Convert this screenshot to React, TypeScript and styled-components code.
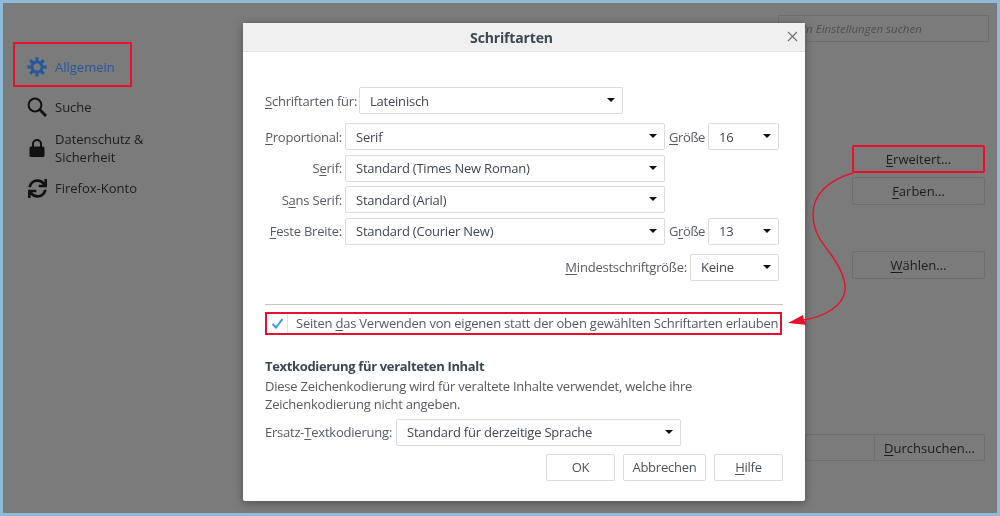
import styled, { createGlobalStyle } from 'styled-components'
import { FaSync } from 'react-icons/fa'

const GlobalStyle = createGlobalStyle`
  html, body {
    margin: 0;
    padding: 0;
    background: #7b7b7b;
  }
  * {
    box-sizing: border-box;
  }
`

const Frame = styled.div`
  position: relative;
  width: 1000px;
  height: 516px;
  display: flex;
  overflow: hidden;
  border: 3px solid #8ebbd8;
  background: #7b7b7b;
  color: #1c1c1c;
  font-family: 'Open Sans', 'Noto Sans', sans-serif;
  font-size: 13px;
  filter: blur(0.4px);
`

const Sidebar = styled.nav`
  width: 240px;
  padding: 39px 0 0 10px;
  display: flex;
  flex-direction: column;
  gap: 3px;
`

const NavItem = styled.div<{ $active?: boolean; $tall?: boolean }>`
  width: 119px;
  height: ${(p) => (p.$active ? '45px' : p.$tall ? '41px' : '34px')};
  padding: ${(p) => (p.$active ? '4px 0 0 12px' : '0 0 0 14px')};
  display: flex;
  align-items: center;
  gap: 8px;
  line-height: 18px;
  white-space: nowrap;
  color: ${(p) => (p.$active ? '#28589b' : '#1c1c1c')};
  border: ${(p) => (p.$active ? '2px solid #e8102c' : 'none')};
`

const NavIcon = styled.span`
  width: 20px;
  flex: none;
  display: flex;
  justify-content: center;
`

const Content = styled.main`
  flex: 1;
  padding: 12px 8px 0 0;
  display: flex;
  flex-direction: column;
  align-items: flex-end;
`

const SearchBox = styled.div`
  width: 211px;
  height: 27px;
  padding-left: 24px;
  display: flex;
  align-items: center;
  border: 1px solid #6e6e6e;
  font-size: 11.5px;
  font-style: italic;
  color: #505050;
`

const PageButton = styled.div<{ $marked?: boolean; $top: number }>`
  width: 133px;
  height: 28px;
  margin: ${(p) => p.$top}px 4px 0 0;
  display: flex;
  align-items: center;
  justify-content: center;
  border-radius: 2px;
  border: ${(p) => (p.$marked ? '2px solid #e8102c' : '1px solid #6e6e6e')};
`

const FileRow = styled.div`
  width: 180px;
  height: 27px;
  margin: 155px 4px 0 0;
  display: flex;
  justify-content: flex-end;
  border: 1px solid #6e6e6e;
  border-radius: 2px;
`

const FileButton = styled.div`
  width: 110px;
  display: flex;
  align-items: center;
  justify-content: center;
  border-left: 1px solid #6e6e6e;
`

const Key = styled.span`
  text-decoration: underline;
  text-underline-offset: 2px;
`

const Dialog = styled.section`
  position: absolute;
  left: 240px;
  top: 20px;
  width: 562px;
  height: 478px;
  background: #fff;
  border-radius: 2px;
  color: #555b63;
  letter-spacing: -0.22px;
  box-shadow: 0 2px 8px rgba(0, 0, 0, 0.35);
`

const DialogHeader = styled.header`
  position: relative;
  height: 29px;
  display: flex;
  align-items: center;
  justify-content: center;
  padding-right: 25px;
  background: #f0f0f0;
  border-bottom: 1px solid #e2e2e2;
  font-weight: 700;
  font-size: 14px;
  letter-spacing: -0.15px;
  color: #3e4651;
`

const CloseIcon = styled.svg`
  position: absolute;
  right: 7px;
  top: 8px;
  width: 11px;
  height: 11px;
  stroke: #6f7378;
  stroke-width: 1.2;
`

const DialogBody = styled.div`
  padding: 35px 22px 0;
`

const Row = styled.div<{ $top?: number; $end?: boolean }>`
  display: flex;
  align-items: center;
  gap: 3px;
  margin-top: ${(p) => p.$top ?? 0}px;
  justify-content: ${(p) => (p.$end ? 'flex-end' : 'flex-start')};
  padding-right: ${(p) => (p.$end ? '4px' : '0')};
  white-space: nowrap;
`

const FontGrid = styled.div`
  margin-top: 9px;
  display: grid;
  grid-template-columns: 77px 320px 37px 71px;
  grid-auto-rows: 27px;
  column-gap: 3px;
  row-gap: 4.6px;
  align-items: center;
`

const FieldLabel = styled.label<{ $width?: number }>`
  text-align: ${(p) => (p.$width ? 'left' : 'right')};
  width: ${(p) => (p.$width ? `${p.$width}px` : 'auto')};
  flex: none;
  white-space: nowrap;
`

const SizeLabel = styled.label`
  padding-left: 1px;
  white-space: nowrap;
  letter-spacing: -0.4px;
`

const SelectBox = styled.div<{ $width?: number }>`
  position: relative;
  width: ${(p) => (p.$width ? `${p.$width}px` : '100%')};
  height: 27px;
  padding-left: 10px;
  display: flex;
  align-items: center;
  background: #fff;
  border: 1px solid #dcdcdc;
  border-radius: 2px;
  color: #414750;
  white-space: nowrap;

  &::after {
    content: '';
    position: absolute;
    right: 7px;
    top: 10px;
    border-left: 4px solid transparent;
    border-right: 4px solid transparent;
    border-top: 4px solid #111;
  }
`

const Divider = styled.hr`
  margin: 23px 0 0;
  border: 0;
  border-top: 1px solid #c4c4c4;
`

const CheckRow = styled.div`
  margin-top: 7px;
  width: 517px;
  height: 23px;
  display: flex;
  align-items: center;
  border: 2px solid #e8102c;
  white-space: nowrap;
`

const CheckCell = styled.span`
  width: 21px;
  height: 19px;
  flex: none;
  margin-right: 8px;
  display: flex;
  align-items: center;
  justify-content: center;
  border-right: 1px solid #e4e4e4;
`

const Heading = styled.h3`
  margin: 22px 0 0;
  font-size: 13px;
  line-height: 18px;
  font-weight: 700;
  letter-spacing: -0.34px;
  color: #3e4651;
`

const Description = styled.p`
  margin: 2px 0 0;
  width: 470px;
  line-height: 18px;
`

const Actions = styled.div`
  margin-top: 8px;
  display: flex;
  justify-content: flex-end;
  gap: 8px;
`

const DialogButton = styled.div<{ $width: number }>`
  width: ${(p) => p.$width}px;
  height: 27px;
  display: flex;
  align-items: center;
  justify-content: center;
  border: 1px solid #dcdcdc;
  border-radius: 2px;
  color: #4c525a;
`

const Annotation = styled.svg`
  position: absolute;
  left: -3px;
  top: -3px;
  width: 1000px;
  height: 516px;
  pointer-events: none;
`

function GearIcon() {
  const angles = [0, 45, 90, 135, 180, 225, 270, 315]
  return (
    <svg width="20" height="20" viewBox="0 0 20 20">
      <circle cx="10" cy="10" r="5" fill="none" stroke="#28589b" strokeWidth="3" />
      {angles.map((angle) => (
        <rect key={angle} x="8.4" y="0.4" width="3.2" height="5" fill="#28589b" transform={`rotate(${angle} 10 10)`} />
      ))}
    </svg>
  )
}

function SearchIcon() {
  return (
    <svg width="20" height="20" viewBox="0 0 20 20" fill="none" stroke="#111">
      <circle cx="8" cy="8" r="6.4" strokeWidth="2" />
      <path d="M12.6 12.6L19 19" strokeWidth="2.8" />
    </svg>
  )
}

function LockIcon() {
  return (
    <svg width="16" height="20" viewBox="0 0 16 20">
      <path d="M4 9V6a4 4 0 0 1 8 0v3" fill="none" stroke="#111" strokeWidth="2" />
      <rect x="0.5" y="8.5" width="15" height="10.5" rx="1.5" fill="#111" />
    </svg>
  )
}

export default function App() {
  return (
    <>
      <GlobalStyle />
      <Frame>
        <Sidebar>
          <NavItem $active>
            <NavIcon>
              <GearIcon />
            </NavIcon>
            Allgemein
          </NavItem>
          <NavItem>
            <NavIcon>
              <SearchIcon />
            </NavIcon>
            Suche
          </NavItem>
          <NavItem $tall>
            <NavIcon>
              <LockIcon />
            </NavIcon>
            <span>
              Datenschutz &amp;
              <br />
              Sicherheit
            </span>
          </NavItem>
          <NavItem>
            <NavIcon>
              <FaSync size={19} color="#111" />
            </NavIcon>
            Firefox-Konto
          </NavItem>
        </Sidebar>

        <Content>
          <SearchBox>In Einstellungen suchen</SearchBox>
          <PageButton $marked $top={103}>
            <span>
              <Key>E</Key>rweitert...
            </span>
          </PageButton>
          <PageButton $top={4}>
            <span>
              <Key>F</Key>arben...
            </span>
          </PageButton>
          <PageButton $top={46}>
            <span>
              <Key>W</Key>ählen...
            </span>
          </PageButton>
          <FileRow>
            <FileButton>
              <span>
                <Key>D</Key>urchsuchen...
              </span>
            </FileButton>
          </FileRow>
        </Content>

        <Dialog>
          <DialogHeader>
            Schriftarten
            <CloseIcon viewBox="0 0 11 11">
              <path d="M1 1l9 9M10 1l-9 9" />
            </CloseIcon>
          </DialogHeader>
          <DialogBody>
            <Row>
              <FieldLabel $width={91}>
                <Key>S</Key>chriftarten für:
              </FieldLabel>
              <SelectBox $width={264}>Lateinisch</SelectBox>
            </Row>

            <FontGrid>
              <FieldLabel>
                <Key>P</Key>roportional:
              </FieldLabel>
              <SelectBox>Serif</SelectBox>
              <SizeLabel>
                <Key>G</Key>röße
              </SizeLabel>
              <SelectBox>16</SelectBox>

              <FieldLabel>
                S<Key>e</Key>rif:
              </FieldLabel>
              <SelectBox>Standard (Times New Roman)</SelectBox>
              <span />
              <span />

              <FieldLabel>
                S<Key>a</Key>ns Serif:
              </FieldLabel>
              <SelectBox>Standard (Arial)</SelectBox>
              <span />
              <span />

              <FieldLabel>
                <Key>F</Key>este Breite:
              </FieldLabel>
              <SelectBox>Standard (Courier New)</SelectBox>
              <SizeLabel>
                G<Key>r</Key>öße
              </SizeLabel>
              <SelectBox>13</SelectBox>
            </FontGrid>

            <Row $top={9} $end>
              <FieldLabel>
                <Key>M</Key>indestschriftgröße:
              </FieldLabel>
              <SelectBox $width={89}>Keine</SelectBox>
            </Row>

            <Divider />

            <CheckRow>
              <CheckCell>
                <svg width="13" height="11" viewBox="0 0 13 11" fill="none">
                  <path d="M1.5 6l3.5 3.5L11.5 1" stroke="#3d97e0" strokeWidth="2" />
                </svg>
              </CheckCell>
              <span>
                Seiten <Key>d</Key>as Verwenden von eigenen statt der oben gewählten Schriftarten erlauben
              </span>
            </CheckRow>

            <Heading>Textkodierung für veralteten Inhalt</Heading>
            <Description>
              Diese Zeichenkodierung wird für veraltete Inhalte verwendet, welche ihre Zeichenkodierung nicht angeben.
            </Description>

            <Row $top={6}>
              <FieldLabel $width={128}>
                Ersatz-<Key>T</Key>extkodierung:
              </FieldLabel>
              <SelectBox $width={285}>Standard für derzeitige Sprache</SelectBox>
            </Row>

            <Actions>
              <DialogButton $width={69}>OK</DialogButton>
              <DialogButton $width={83}>Abbrechen</DialogButton>
              <DialogButton $width={69}>
                <span>
                  <Key>H</Key>ilfe
                </span>
              </DialogButton>
            </Actions>
          </DialogBody>
        </Dialog>

        <Annotation viewBox="0 0 1000 516">
          <path
            d="M853 173C828 180 813 195 813 214C813 232 822 243 830 253C840 267 846 280 845 290C844 305 825 317 803 320"
            fill="none"
            stroke="#e8102c"
            strokeWidth="1.4"
          />
          <path d="M788 323L803 315L804 320L807 325Z" fill="#e8102c" />
        </Annotation>
      </Frame>
    </>
  )
}
